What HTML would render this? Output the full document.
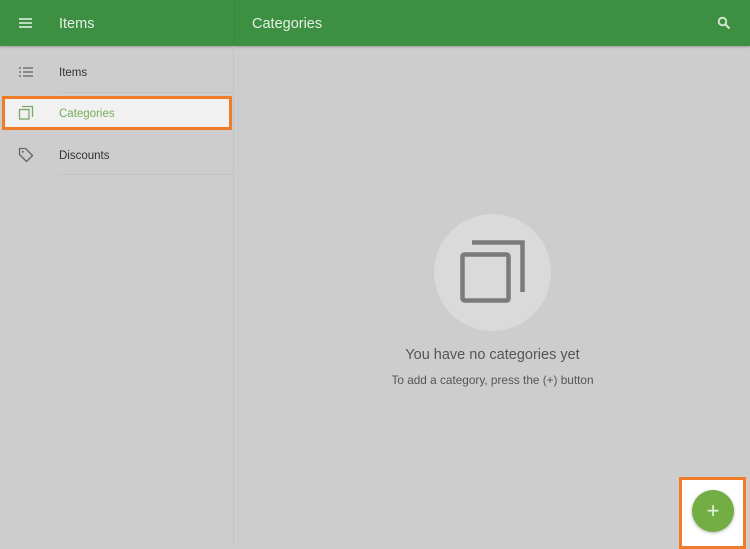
<!DOCTYPE html>
<html><head><meta charset="utf-8"><style>
*{margin:0;padding:0;box-sizing:border-box}
body{width:750px;height:545px;overflow:hidden;background:#cdcdcd;font-family:"Liberation Sans",sans-serif;position:relative}
.hdr{position:absolute;left:0;top:0;width:750px;height:46px;background:#3d8f41;box-shadow:0 1px 2px rgba(0,0,0,.25)}
.hdr .sep{position:absolute;left:234px;top:0;width:1px;height:46px;background:#3a8a3e}
.t{position:absolute;color:#e6f0e6;font-size:14.5px}
.side{position:absolute;left:0;top:46px;width:234px;height:499px;border-right:1px solid #c2c2c2}
.row{position:absolute;left:0;width:234px;height:41px;font-size:11.5px;color:#333}
.row span{position:absolute;left:59px;top:15px}
.line{position:absolute;left:59px;width:175px;height:1px;background:#c4c4c4}
</style></head><body>
<div class="hdr">
<div class="sep"></div>
<svg style="position:absolute;left:19px;top:17px" width="14" height="12"><g stroke="#e0ece0" stroke-width="1.6"><line x1="0" y1="2" x2="13" y2="2"/><line x1="0" y1="6" x2="13" y2="6"/><line x1="0" y1="10" x2="13" y2="10"/></g></svg>
<div class="t" style="left:59px;top:16px">Items</div>
<div class="t" style="left:252px;top:16px">Categories</div>
<svg style="position:absolute;left:717px;top:16px" width="14" height="14"><circle cx="5.5" cy="5.5" r="3.8" fill="none" stroke="#d8e8d8" stroke-width="1.8"/><line x1="8.5" y1="8.5" x2="12.5" y2="12.5" stroke="#d8e8d8" stroke-width="2"/></svg>
</div>
<div class="side">
<div class="row" style="top:6px"><svg style="position:absolute;left:19px;top:15px" width="14" height="10"><g stroke="#666" stroke-width="1.3"><line x1="0" y1="1" x2="2" y2="1"/><line x1="4" y1="1" x2="14" y2="1"/><line x1="0" y1="5" x2="2" y2="5"/><line x1="4" y1="5" x2="14" y2="5"/><line x1="0" y1="9" x2="2" y2="9"/><line x1="4" y1="9" x2="14" y2="9"/></g></svg><span>Items</span></div>
<div class="line" style="top:46px"></div>
<div style="position:absolute;left:2px;top:50px;width:230px;height:34px;background:#f1f1f1;border:3px solid #f07c2a"></div>
<svg style="position:absolute;left:18px;top:59px" width="16" height="16"><path d="M4 1.5H14.5V12" fill="none" stroke="#7aa86a" stroke-width="1.3"/><rect x="1.5" y="4.5" width="9.5" height="9.5" fill="none" stroke="#7aa86a" stroke-width="1.3"/></svg>
<div style="position:absolute;left:59px;top:62px;font-size:11.5px;color:#76ad5b">Categories</div>
<div class="row" style="top:89px"><svg style="position:absolute;left:18px;top:12px" width="16" height="16"><path d="M1.5 1.5H7.5L14.5 8.5L8.5 14.5L1.5 7.5Z" fill="none" stroke="#666" stroke-width="1.3" stroke-linejoin="round"/><circle cx="4.8" cy="4.8" r="1" fill="#666"/></svg><span>Discounts</span></div>
<div class="line" style="top:128px"></div>
</div>
<div style="position:absolute;left:434px;top:214px;width:117px;height:117px;border-radius:50%;background:#dadada"></div>
<svg style="position:absolute;left:458px;top:238px" width="70" height="68"><path d="M14 4.5H64.5V54" fill="none" stroke="#7b7b7b" stroke-width="4.5"/><rect x="4.5" y="16.5" width="46" height="46" rx="2" fill="none" stroke="#7b7b7b" stroke-width="4.5"/></svg>
<div style="position:absolute;left:0;width:985px;top:347px;text-align:center;font-size:14.5px;color:#555">You have no categories yet</div>
<div style="position:absolute;left:0;width:985px;top:373px;text-align:center;font-size:11.8px;color:#555">To add a category, press the (+) button</div>
<div style="position:absolute;left:679px;top:477px;width:67px;height:72px;background:#fff;border:3px solid #f07c2a"></div>
<div style="position:absolute;left:692px;top:490px;width:42px;height:42px;border-radius:50%;background:#73ae45;box-shadow:0 1px 3px rgba(0,0,0,.3)"></div>
<div style="position:absolute;left:692px;top:490px;width:42px;height:42px;line-height:42px;text-align:center;color:#e8f2e0;font-size:22px">+</div>
</body></html>
